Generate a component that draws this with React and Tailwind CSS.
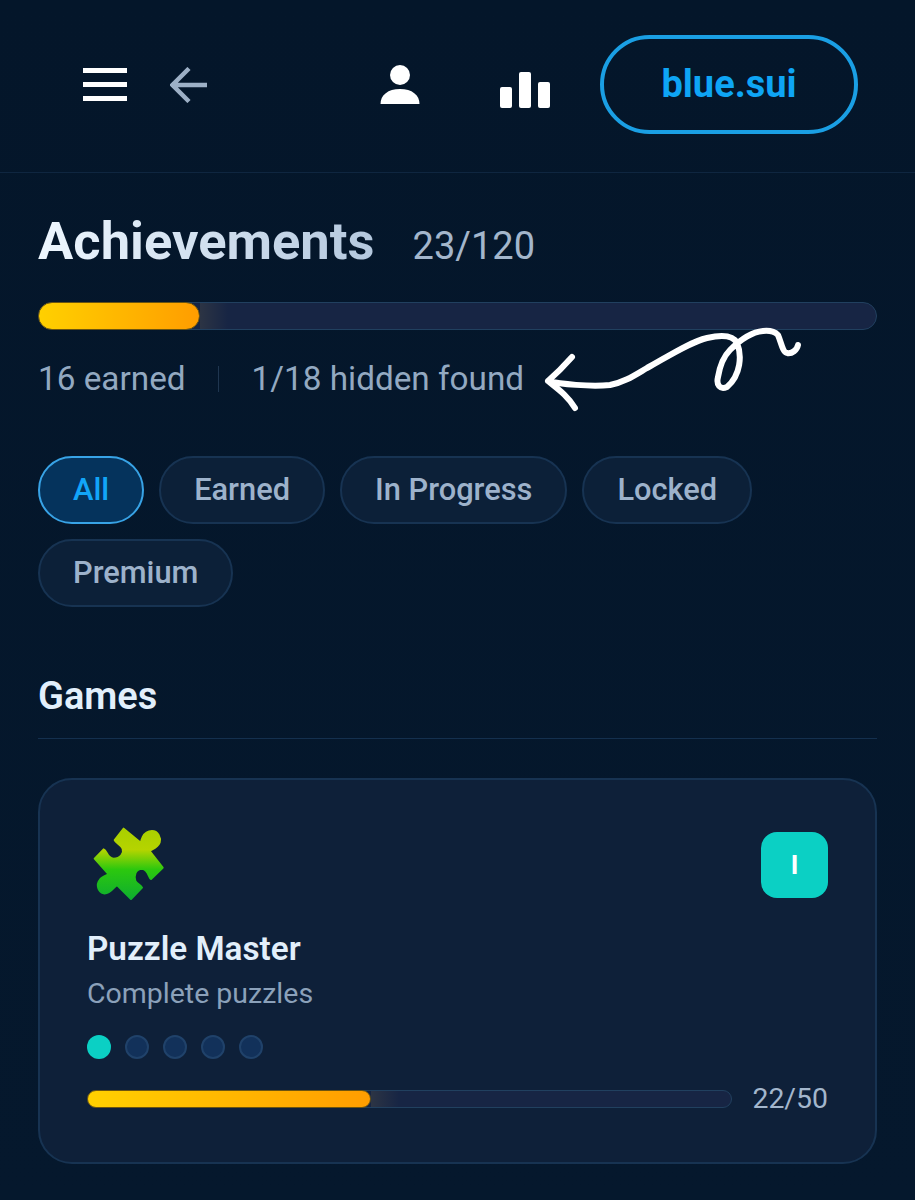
import React from "react";

const filters = ["All", "Earned", "In Progress", "Locked", "Premium"];

const ProgressBar = ({ percent, height }) => (
  <div className={`relative flex-1 ${height} rounded-full bg-[#172544] border border-[#21405f]`}>
    <div
      className="absolute -top-px -bottom-px -left-px rounded-full bg-gradient-to-r from-[#ffd000] to-[#ff9d00] border border-[#6b5410]"
      style={{ width: percent }}
    />
    <div
      className="absolute top-0 bottom-0 w-[28px] bg-gradient-to-r from-[#2c3444] to-transparent"
      style={{ left: percent, marginLeft: -1 }}
    />
  </div>
);

const PuzzleIcon = () => (
  <svg width="74" height="75" viewBox="65 50 222 225">
    <defs>
      <linearGradient id="puzzle" x1="0" y1="0" x2="0" y2="1">
        <stop offset="0" stopColor="#a9cf00" />
        <stop offset="0.3" stopColor="#b5d400" />
        <stop offset="0.58" stopColor="#2cc80e" />
        <stop offset="1" stopColor="#0eae2f" />
      </linearGradient>
    </defs>
    <path
      d="M160 58 L212 101 C212 101 215 65 245 65 C263 65 272 85 268 99 C263 113 245 120 238 125 L277 175 L242 209 C235 207 235 180 215 178 C195 178 190 200 195 215 C200 225 211 225 215 235 L182 269 L140 227 C130 232 120 255 100 252 C82 247 78 225 88 212 C95 202 110 198 115 195 L73 148 L100 120 C110 123 110 148 130 148 C150 148 162 132 157 118 C152 105 135 100 133 92 Z"
      fill="url(#puzzle)"
      stroke="url(#puzzle)"
      strokeWidth="6"
      strokeLinejoin="round"
    />
  </svg>
);

const App = () => {
  return (
    <div className="relative h-[1200px] overflow-hidden bg-gradient-to-b from-[#04162a] to-[#05182d] font-['Roboto',sans-serif]">
      {/* header */}
      <header className="flex h-[173px] items-center border-b border-[#0f2640] pl-[83px] pr-[57px] pb-[3px]">
        <div className="flex w-[44px] flex-col gap-[9px]">
          <div className="h-[5px] bg-white" />
          <div className="h-[5px] bg-white" />
          <div className="h-[5px] bg-white" />
        </div>
        <svg className="ml-[43px]" width="38" height="36" viewBox="0 0 38 36" fill="none">
          <path d="M37 18 H3 M19 1.5 L2.5 18 L19 34.5" stroke="#9db0c6" strokeWidth="4.5" />
        </svg>
        <svg className="ml-[172px]" width="40" height="40" viewBox="0 0 40 40" fill="white">
          <circle cx="20" cy="10" r="10" />
          <path d="M0.5 39 C0.5 30 8 24 20 24 C32 24 39.5 30 39.5 39 Z" />
        </svg>
        <div className="ml-[80px] mt-[11px] flex items-end gap-[7px]">
          <div className="h-[21px] w-[12px] rounded-[2px] bg-white" />
          <div className="h-[36px] w-[12px] rounded-[2px] bg-white" />
          <div className="h-[26px] w-[12px] rounded-[2px] bg-white" />
        </div>
        <button className="ml-auto flex h-[99px] w-[258px] items-center justify-center rounded-full border-[4px] border-[#1a9fe4] text-[38px] font-bold text-[#0ea5f5]">
          blue.sui
        </button>
      </header>

      <main className="px-[38px]">
        {/* title */}
        <div className="mt-[36px] flex items-baseline gap-[38px]">
          <h1 className="bg-gradient-to-r from-[#eef7ff] to-[#b4c8de] bg-clip-text text-[52.5px] leading-[64px] font-bold text-transparent">
            Achievements
          </h1>
          <span className="text-[38px] text-[#a3b6cc]">23/120</span>
        </div>

        <div className="mt-[27px] flex">
          <ProgressBar percent="19.3%" height="h-[28px]" />
        </div>

        <div className="mt-[28px] flex items-center text-[33.3px] leading-[42px] text-[#93a9c1]">
          <span>16 earned</span>
          <div className="ml-[32px] h-[26px] w-[1px] bg-[#1f3650]" />
          <span className="ml-[33px]">1/18 hidden found</span>
        </div>

        {/* filters */}
        <div className="mt-[56px] flex w-[760px] flex-wrap gap-x-[15px] gap-y-[15px]">
          {filters.map((name) =>
            name === "All" ? (
              <div
                key={name}
                className="flex h-[68px] items-center rounded-full border-2 border-[#38a3e6] bg-[#05335c] px-[33px] text-[30.8px] font-medium text-[#12a5f8]"
              >
                {name}
              </div>
            ) : (
              <div
                key={name}
                className="flex h-[68px] items-center rounded-full border-2 border-[#173352] bg-[#0c2038] px-[33px] text-[30.8px] font-medium text-[#9db2cb]"
              >
                {name}
              </div>
            )
          )}
        </div>

        {/* section */}
        <h2 className="mt-[67px] text-[38px] leading-[44px] font-semibold text-[#e2effb]">Games</h2>
        <div className="mt-[20px] h-px bg-[#14304e]" />

        {/* card */}
        <div className="mt-[39px] h-[386px] rounded-[34px] border-2 border-[#173352] bg-[#0e2039] px-[47px] pt-[46px]">
          <div className="flex items-start justify-between">
            <div className="ml-[5px]">
              <PuzzleIcon />
            </div>
            <div className="mt-[6px] flex h-[66px] w-[67px] items-center justify-center rounded-[16px] bg-[#0bd0c4] text-[26px] font-bold text-white">
              I
            </div>
          </div>
          <h3 className="mt-[27px] text-[33.3px] leading-[42px] font-semibold text-[#e2effb]">Puzzle Master</h3>
          <p className="mt-[6px] text-[28.5px] leading-[36px] text-[#8ba1ba]">Complete puzzles</p>
          <div className="mt-[23px] flex gap-[14px]">
            <div className="h-[24px] w-[24px] rounded-full bg-[#0bd0c4]" />
            <div className="h-[24px] w-[24px] rounded-full border-2 border-[#20426a] bg-[#12315a]" />
            <div className="h-[24px] w-[24px] rounded-full border-2 border-[#20426a] bg-[#12315a]" />
            <div className="h-[24px] w-[24px] rounded-full border-2 border-[#20426a] bg-[#12315a]" />
            <div className="h-[24px] w-[24px] rounded-full border-2 border-[#20426a] bg-[#12315a]" />
          </div>
          <div className="mt-[22px] flex items-center gap-[20px]">
            <ProgressBar percent="44.2%" height="h-[18px]" />
            <span className="text-[28.4px] leading-[36px] text-[#a3b6cc]">22/50</span>
          </div>
        </div>
      </main>

      {/* hand drawn arrow on top of the screenshot */}
      <svg className="absolute top-0 left-0" width="915" height="420" fill="none">
        <path
          d="M572 357 C564 366 556 374 548 381 C558 389 568 396 575 408 M548 381 C560 384 590 387 610 385 C625 382 635 375 647 368 C667 357 690 342 707 338 C720 335 733 335 737 343 C742 355 741 375 727 387 C720 390 716 385 718 377 C720 365 725 355 730 350 C740 340 752 332 763 331 C772 330 776 333 778 335 C781 342 783 353 787 353 C792 354 797 350 798 345"
          stroke="white"
          strokeWidth="6"
          strokeLinecap="round"
          strokeLinejoin="round"
        />
      </svg>
    </div>
  );
};

export default App;
